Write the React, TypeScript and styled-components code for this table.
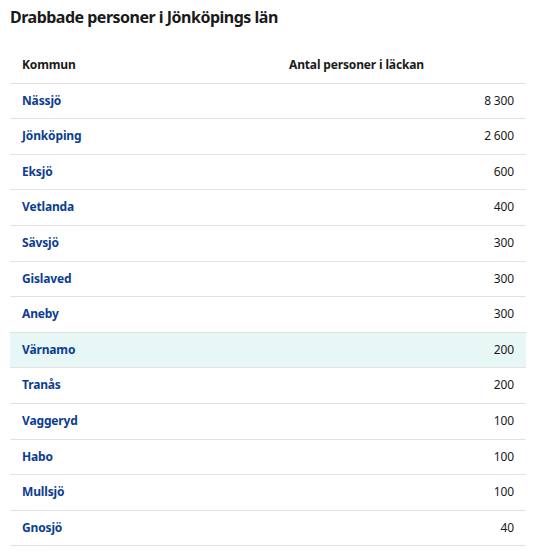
import React from "react";
import styled, { createGlobalStyle } from "styled-components";

const Global = createGlobalStyle`
  html, body { margin: 0; padding: 0; background: #fff; }
  body { font-family: "Noto Sans", "Open Sans", sans-serif; color: #1a1a1a; }
`;

const Page = styled.div`
  padding: 5px 26px 0 10px;
`;

const Title = styled.h2`
  margin: 0 0 19px 0;
  font-size: 16px;
  letter-spacing: -0.5px;
  font-weight: 700;
  line-height: 24px;
  color: #1a1a1a;
`;

const Table = styled.table`
  width: 100%;
  border-collapse: collapse;
  font-size: 12px;
  letter-spacing: -0.15px;
`;

const HeadCell = styled.th<{ $w?: string }>`
  text-align: left;
  font-weight: 700;
  padding: 8px 12px;
  line-height: 18.6px;
  border-bottom: 1px solid #e2e2e2;
  width: ${(p) => p.$w || "auto"};
  color: #1a1a1a;
`;

const Row = styled.tr<{ $hl?: boolean }>`
  background: ${(p) => (p.$hl ? "#e7f7f6" : "transparent")};
`;

const Cell = styled.td<{ $num?: boolean }>`
  padding: 8px 12px;
  line-height: 18.6px;
  border-bottom: 1px solid #e2e2e2;
  text-align: ${(p) => (p.$num ? "right" : "left")};
  color: #1a1a1a;
`;

const Link = styled.a`
  color: #0b3d91;
  font-weight: 700;
  text-decoration: none;
`;

const rows: [string, string][] = [
  ["Nässjö", "8 300"],
  ["Jönköping", "2 600"],
  ["Eksjö", "600"],
  ["Vetlanda", "400"],
  ["Sävsjö", "300"],
  ["Gislaved", "300"],
  ["Aneby", "300"],
  ["Värnamo", "200"],
  ["Tranås", "200"],
  ["Vaggeryd", "100"],
  ["Habo", "100"],
  ["Mullsjö", "100"],
  ["Gnosjö", "40"],
];

export default function App() {
  return (
    <Page>
      <Global />
      <Title>Drabbade personer i Jönköpings län</Title>
      <Table>
        <thead>
          <tr>
            <HeadCell $w="243px">Kommun</HeadCell>
            <HeadCell>Antal personer i läckan</HeadCell>
          </tr>
        </thead>
        <tbody>
          {rows.map(([name, n]) => (
            <Row key={name} $hl={name === "Värnamo"}>
              <Cell>
                <Link href="#">{name}</Link>
              </Cell>
              <Cell $num>{n}</Cell>
            </Row>
          ))}
        </tbody>
      </Table>
    </Page>
  );
}
